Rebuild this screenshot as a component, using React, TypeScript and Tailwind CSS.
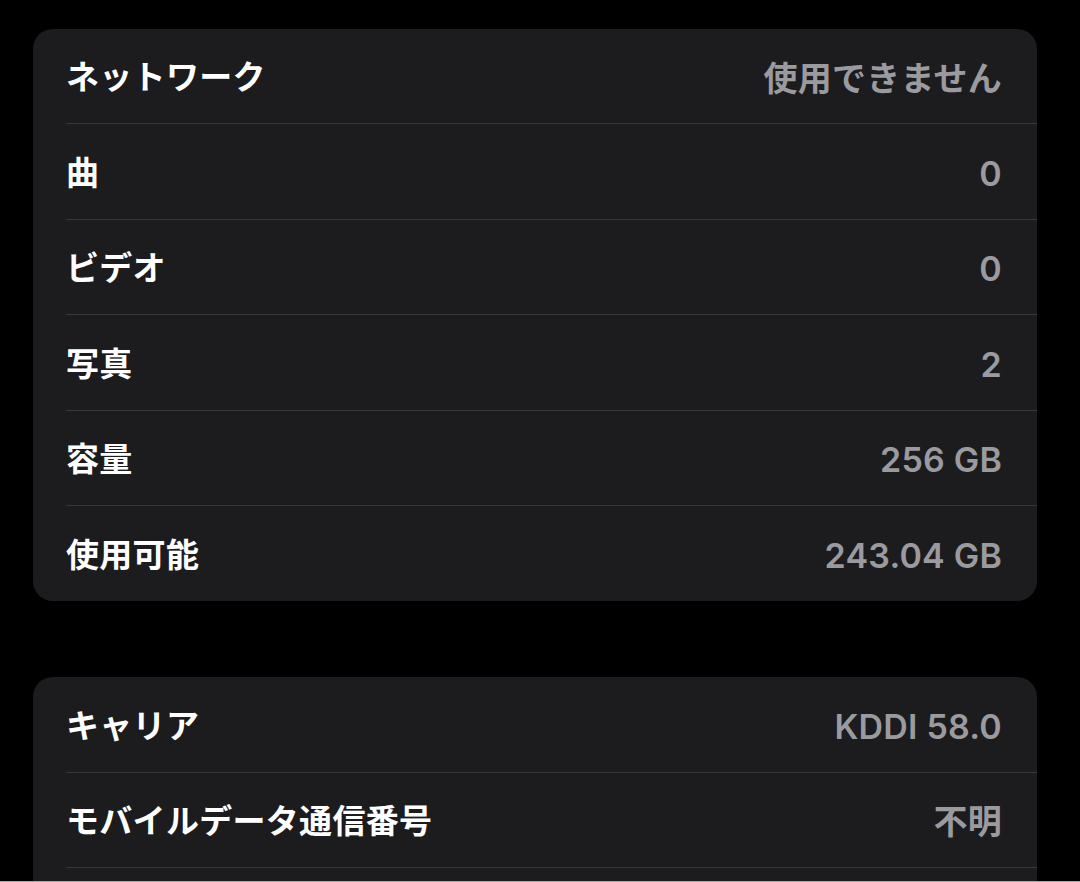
import React from 'react';

type Row = { label: string; value: string };

const storage: Row[] = [
  { label: 'ネットワーク', value: '使用できません' },
  { label: '曲', value: '0' },
  { label: 'ビデオ', value: '0' },
  { label: '写真', value: '2' },
  { label: '容量', value: '256 GB' },
  { label: '使用可能', value: '243.04 GB' },
];

const carrier: Row[] = [
  { label: 'キャリア', value: 'KDDI 58.0' },
  { label: 'モバイルデータ通信番号', value: '不明' },
  { label: '', value: '' },
];

const InfoCard = ({ rows }: { rows: Row[] }) => (
  <div className="shrink-0 bg-[#1c1c1e] rounded-[20px] pl-[33px] overflow-hidden">
    {rows.map((row, i) => (
      <div
        key={i}
        className={`h-[95.4px] pt-[4px] flex items-center justify-between pr-[35px] ${
          i < rows.length - 1 ? 'border-b border-[#38383a]' : ''
        }`}
      >
        <span className="text-white text-[33px] font-semibold tracking-[0.3px]">{row.label}</span>
        <span className="text-[#9a9a9f] text-[34px] font-semibold tracking-[0.2px]">{row.value}</span>
      </div>
    ))}
  </div>
);

export default function App() {
  return (
    <div className="w-[1080px] h-[882px] bg-black overflow-hidden font-['Inter','Noto_Sans_CJK_JP',sans-serif]">
      <div className="h-[881px] overflow-hidden pl-[33px] pt-[29px] pr-[43px] flex flex-col gap-[76px]">
        <InfoCard rows={storage} />
        <InfoCard rows={carrier} />
      </div>
      <div className="h-px bg-[#a8a8a8]" />
    </div>
  );
}
